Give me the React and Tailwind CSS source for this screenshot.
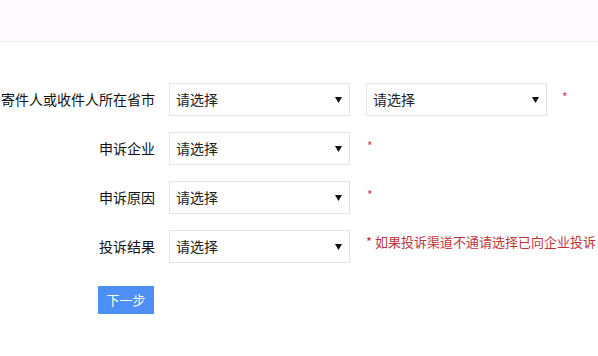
import React from "react";

function Sel({ w = "w-[181px]" }) {
  return (
    <div className={`${w} h-[33px] border border-[#e3e3e3] bg-white flex items-center justify-between pl-[6px] pr-[7px] text-[14px] text-[#222]`}>
      <span>请选择</span>
      <svg width="7" height="6" viewBox="0 0 7 6"><path d="M0 0H7L3.5 6Z" fill="#111" /></svg>
    </div>
  );
}

function Star() {
  return <span className="self-start mt-[2px] text-[12px] leading-[12px] text-[#c4464b]">*</span>;
}

export default function App() {
  return (
    <div className="w-[598px] h-[356px] overflow-hidden bg-white" style={{ fontFamily: '"Noto Sans CJK SC", "Microsoft YaHei", sans-serif' }}>
      <div className="h-[42px] bg-[#fcfafc] border-b border-[#f1edf1]" />
      <div className="mt-[41px] flex flex-col gap-[16px]">
        <div className="flex items-center">
          <div className="w-[155px] text-right text-[14px] text-[#111] whitespace-nowrap">寄件人或收件人所在省市</div>
          <div className="ml-[14px] flex items-center">
            <Sel />
            <div className="ml-[16px]"><Sel w="w-[181px]" /></div>
            <div className="ml-[15px] self-start"><Star /></div>
          </div>
        </div>
        <div className="flex items-center">
          <div className="w-[155px] text-right text-[14px] text-[#111]">申诉企业</div>
          <div className="ml-[14px] flex">
            <Sel />
            <div className="ml-[17px]"><Star /></div>
          </div>
        </div>
        <div className="flex items-center">
          <div className="w-[155px] text-right text-[14px] text-[#111]">申诉原因</div>
          <div className="ml-[14px] flex">
            <Sel />
            <div className="ml-[17px]"><Star /></div>
          </div>
        </div>
        <div className="flex items-center">
          <div className="w-[155px] text-right text-[14px] text-[#111]">投诉结果</div>
          <div className="ml-[14px] flex items-center">
            <Sel />
            <div className="ml-[16px] mb-[10px] whitespace-nowrap text-[13px] text-[#c0353a]">* 如果投诉渠道不通请选择已向企业投诉</div>
          </div>
        </div>
      </div>
      <div className="mt-[23px] ml-[98px] w-[56px] h-[28px] bg-[#4d8ff5] text-white text-[13px] flex items-center justify-center">下一步</div>
    </div>
  );
}
